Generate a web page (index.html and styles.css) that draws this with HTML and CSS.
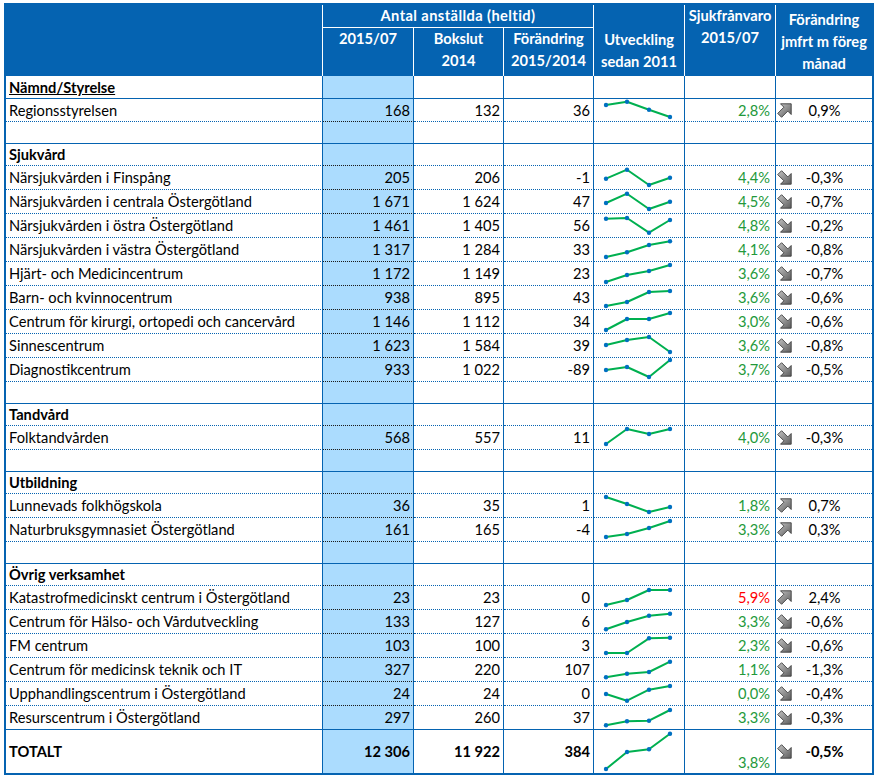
FILE: index.html
```html
<!DOCTYPE html>
<html lang="sv">
<head>
<meta charset="utf-8">
<title>Antal anställda</title>
<link rel="stylesheet" href="styles.css">
</head>
<body>
<svg class="defs" width="0" height="0" aria-hidden="true">
  <defs>
    <linearGradient id="gr" x1="0" y1="0" x2="1" y2="1">
      <stop offset="0" stop-color="#c4c4c4"/>
      <stop offset="1" stop-color="#5c5c5c"/>
    </linearGradient>
    <symbol id="up" viewBox="0 0 15 15">
      <polygon points="3.5,0.8 14.2,0.8 14.2,11.5 10.8,8.1 4.6,14.3 0.7,10.4 6.9,4.2" fill="url(#gr)" stroke="#3c3c3c" stroke-width="0.9" stroke-linejoin="miter"/>
    </symbol>
    <symbol id="down" viewBox="0 0 15 15">
      <polygon points="3.5,14.2 14.2,14.2 14.2,3.5 10.8,6.9 4.6,0.7 0.7,4.6 6.9,10.8" fill="url(#gr)" stroke="#3c3c3c" stroke-width="0.9" stroke-linejoin="miter"/>
    </symbol>
  </defs>
</svg>
<div class="wrap">
<table class="t">
  <colgroup>
    <col class="w-name"><col class="w-n1"><col class="w-n2"><col class="w-n3"><col class="w-spk"><col class="w-sick"><col class="w-chg">
  </colgroup>
  <thead>
    <tr class="h1">
      <th rowspan="2" class="h-name"></th>
      <th colspan="3" class="h-grp">Antal anställda (heltid)</th>
      <th rowspan="2" class="h-spk">Utveckling<br>sedan 2011</th>
      <th rowspan="2" class="h-sick">Sjukfrånvaro<br>2015/07</th>
      <th rowspan="2" class="h-chg">Förändring<br>jmfrt m föreg<br>månad</th>
    </tr>
    <tr class="h2">
      <th>2015/07</th>
      <th>Bokslut<br>2014</th>
      <th>Förändring<br>2015/2014</th>
    </tr>
  </thead>
  <tbody>
    <tr class="sec first solid"><td class="nm"><u>Nämnd/Styrelse</u></td><td class="n1"></td><td></td><td></td><td></td><td></td><td></td></tr>
    <tr class="row r23"><td class="nm">Regionsstyrelsen</td><td class="n1">168</td><td class="n">132</td><td class="n">36</td>
      <td class="spk"><svg class="s22" viewBox="0 1 90 22"><polyline points="12,7 33,3.7 55,11.7 76,19"/><circle cx="12" cy="7"/><circle cx="33" cy="3.7"/><circle cx="55" cy="11.7"/><circle cx="76" cy="19"/></svg></td>
      <td class="sick">2,8%</td><td><div class="chg"><svg class="ar"><use href="#up"/></svg><span>0,9%</span></div></td></tr>
    <tr class="gap solid"><td></td><td class="n1"></td><td></td><td></td><td></td><td></td><td></td></tr>

    <tr class="sec"><td class="nm">Sjukvård</td><td class="n1"></td><td></td><td></td><td></td><td></td><td></td></tr>
    <tr class="row"><td class="nm">Närsjukvården i Finspång</td><td class="n1">205</td><td class="n">206</td><td class="n">-1</td>
      <td class="spk"><svg viewBox="0 1 90 23"><polyline points="12,13.7 33,4.7 55,20 76,12.7"/><circle cx="12" cy="13.7"/><circle cx="33" cy="4.7"/><circle cx="55" cy="20"/><circle cx="76" cy="12.7"/></svg></td>
      <td class="sick">4,4%</td><td><div class="chg"><svg class="ar"><use href="#down"/></svg><span>-0,3%</span></div></td></tr>
    <tr class="row"><td class="nm">Närsjukvården i centrala Östergötland</td><td class="n1">1 671</td><td class="n">1 624</td><td class="n">47</td>
      <td class="spk"><svg viewBox="0 1 90 23"><polyline points="12,14 33,4.7 55,20 76,12.7"/><circle cx="12" cy="14"/><circle cx="33" cy="4.7"/><circle cx="55" cy="20"/><circle cx="76" cy="12.7"/></svg></td>
      <td class="sick">4,5%</td><td><div class="chg"><svg class="ar"><use href="#down"/></svg><span>-0,7%</span></div></td></tr>
    <tr class="row"><td class="nm">Närsjukvården i östra Östergötland</td><td class="n1">1 461</td><td class="n">1 405</td><td class="n">56</td>
      <td class="spk"><svg viewBox="0 1 90 23"><polyline points="12,5.7 33,5 55,19.7 76,7"/><circle cx="12" cy="5.7"/><circle cx="33" cy="5"/><circle cx="55" cy="19.7"/><circle cx="76" cy="7"/></svg></td>
      <td class="sick">4,8%</td><td><div class="chg"><svg class="ar"><use href="#down"/></svg><span>-0,2%</span></div></td></tr>
    <tr class="row"><td class="nm">Närsjukvården i västra Östergötland</td><td class="n1">1 317</td><td class="n">1 284</td><td class="n">33</td>
      <td class="spk"><svg viewBox="0 1 90 23"><polyline points="12,20 33,15.3 55,8 76,4.3"/><circle cx="12" cy="20"/><circle cx="33" cy="15.3"/><circle cx="55" cy="8"/><circle cx="76" cy="4.3"/></svg></td>
      <td class="sick">4,1%</td><td><div class="chg"><svg class="ar"><use href="#down"/></svg><span>-0,8%</span></div></td></tr>
    <tr class="row"><td class="nm">Hjärt- och Medicincentrum</td><td class="n1">1 172</td><td class="n">1 149</td><td class="n">23</td>
      <td class="spk"><svg viewBox="0 1 90 23"><polyline points="12,21 33,14 55,10 76,4"/><circle cx="12" cy="21"/><circle cx="33" cy="14"/><circle cx="55" cy="10"/><circle cx="76" cy="4"/></svg></td>
      <td class="sick">3,6%</td><td><div class="chg"><svg class="ar"><use href="#down"/></svg><span>-0,7%</span></div></td></tr>
    <tr class="row"><td class="nm">Barn- och kvinnocentrum</td><td class="n1">938</td><td class="n">895</td><td class="n">43</td>
      <td class="spk"><svg viewBox="0 1 90 23"><polyline points="12,21 33,17 55,7 76,6"/><circle cx="12" cy="21"/><circle cx="33" cy="17"/><circle cx="55" cy="7"/><circle cx="76" cy="6"/></svg></td>
      <td class="sick">3,6%</td><td><div class="chg"><svg class="ar"><use href="#down"/></svg><span>-0,6%</span></div></td></tr>
    <tr class="row"><td class="nm">Centrum för kirurgi, ortopedi och cancervård</td><td class="n1">1 146</td><td class="n">1 112</td><td class="n">34</td>
      <td class="spk"><svg viewBox="0 1 90 23"><polyline points="12,21 33,10 55,10 76,4"/><circle cx="12" cy="21"/><circle cx="33" cy="10"/><circle cx="55" cy="10"/><circle cx="76" cy="4"/></svg></td>
      <td class="sick">3,0%</td><td><div class="chg"><svg class="ar"><use href="#down"/></svg><span>-0,6%</span></div></td></tr>
    <tr class="row"><td class="nm">Sinnescentrum</td><td class="n1">1 623</td><td class="n">1 584</td><td class="n">39</td>
      <td class="spk"><svg viewBox="0 1 90 23"><polyline points="12,12 33,7 55,4 76,19"/><circle cx="12" cy="12"/><circle cx="33" cy="7"/><circle cx="55" cy="4"/><circle cx="76" cy="19"/></svg></td>
      <td class="sick">3,6%</td><td><div class="chg"><svg class="ar"><use href="#down"/></svg><span>-0,8%</span></div></td></tr>
    <tr class="row"><td class="nm">Diagnostikcentrum</td><td class="n1">933</td><td class="n">1 022</td><td class="n">-89</td>
      <td class="spk"><svg viewBox="0 1 90 23"><polyline points="12,13 33,10 55,20 76,3"/><circle cx="12" cy="13"/><circle cx="33" cy="10"/><circle cx="55" cy="20"/><circle cx="76" cy="3"/></svg></td>
      <td class="sick">3,7%</td><td><div class="chg"><svg class="ar"><use href="#down"/></svg><span>-0,5%</span></div></td></tr>
    <tr class="gap solid"><td></td><td class="n1"></td><td></td><td></td><td></td><td></td><td></td></tr>

    <tr class="sec"><td class="nm">Tandvård</td><td class="n1"></td><td></td><td></td><td></td><td></td><td></td></tr>
    <tr class="row"><td class="nm">Folktandvården</td><td class="n1">568</td><td class="n">557</td><td class="n">11</td>
      <td class="spk"><svg viewBox="0 1 90 23"><polyline points="12,19 33,4 55,9 76,4"/><circle cx="12" cy="19"/><circle cx="33" cy="4"/><circle cx="55" cy="9"/><circle cx="76" cy="4"/></svg></td>
      <td class="sick">4,0%</td><td><div class="chg"><svg class="ar"><use href="#down"/></svg><span>-0,3%</span></div></td></tr>
    <tr class="gap solid"><td></td><td class="n1"></td><td></td><td></td><td></td><td></td><td></td></tr>

    <tr class="sec"><td class="nm">Utbildning</td><td class="n1"></td><td></td><td></td><td></td><td></td><td></td></tr>
    <tr class="row"><td class="nm">Lunnevads folkhögskola</td><td class="n1">36</td><td class="n">35</td><td class="n">1</td>
      <td class="spk"><svg viewBox="0 1 90 23"><polyline points="12,4 33,11 55,19 76,14"/><circle cx="12" cy="4"/><circle cx="33" cy="11"/><circle cx="55" cy="19"/><circle cx="76" cy="14"/></svg></td>
      <td class="sick">1,8%</td><td><div class="chg"><svg class="ar"><use href="#up"/></svg><span>0,7%</span></div></td></tr>
    <tr class="row"><td class="nm">Naturbruksgymnasiet Östergötland</td><td class="n1">161</td><td class="n">165</td><td class="n">-4</td>
      <td class="spk"><svg viewBox="0 1 90 23"><polyline points="12,20 33,17 55,11 76,4"/><circle cx="12" cy="20"/><circle cx="33" cy="17"/><circle cx="55" cy="11"/><circle cx="76" cy="4"/></svg></td>
      <td class="sick">3,3%</td><td><div class="chg"><svg class="ar"><use href="#up"/></svg><span>0,3%</span></div></td></tr>
    <tr class="gap solid"><td></td><td class="n1"></td><td></td><td></td><td></td><td></td><td></td></tr>

    <tr class="sec"><td class="nm">Övrig verksamhet</td><td class="n1"></td><td></td><td></td><td></td><td></td><td></td></tr>
    <tr class="row"><td class="nm">Katastrofmedicinskt centrum i Östergötland</td><td class="n1">23</td><td class="n">23</td><td class="n">0</td>
      <td class="spk"><svg viewBox="0 1 90 23"><polyline points="12,20 33,15 55,5 76,5"/><circle cx="12" cy="20"/><circle cx="33" cy="15"/><circle cx="55" cy="5"/><circle cx="76" cy="5"/></svg></td>
      <td class="sick red">5,9%</td><td><div class="chg"><svg class="ar"><use href="#up"/></svg><span>2,4%</span></div></td></tr>
    <tr class="row"><td class="nm">Centrum för Hälso- och Vårdutveckling</td><td class="n1">133</td><td class="n">127</td><td class="n">6</td>
      <td class="spk"><svg viewBox="0 1 90 23"><polyline points="12,20.3 33,13 55,6.7 76,4.7"/><circle cx="12" cy="20.3"/><circle cx="33" cy="13"/><circle cx="55" cy="6.7"/><circle cx="76" cy="4.7"/></svg></td>
      <td class="sick">3,3%</td><td><div class="chg"><svg class="ar"><use href="#down"/></svg><span>-0,6%</span></div></td></tr>
    <tr class="row"><td class="nm">FM centrum</td><td class="n1">103</td><td class="n">100</td><td class="n">3</td>
      <td class="spk"><svg viewBox="0 1 90 23"><polyline points="12,20 33,20 55,5.3 76,4.7"/><circle cx="12" cy="20"/><circle cx="33" cy="20"/><circle cx="55" cy="5.3"/><circle cx="76" cy="4.7"/></svg></td>
      <td class="sick">2,3%</td><td><div class="chg"><svg class="ar"><use href="#down"/></svg><span>-0,6%</span></div></td></tr>
    <tr class="row"><td class="nm">Centrum för medicinsk teknik och IT</td><td class="n1">327</td><td class="n">220</td><td class="n">107</td>
      <td class="spk"><svg viewBox="0 1 90 23"><polyline points="12,20.3 33,16.7 55,15 76,4.7"/><circle cx="12" cy="20.3"/><circle cx="33" cy="16.7"/><circle cx="55" cy="15"/><circle cx="76" cy="4.7"/></svg></td>
      <td class="sick">1,1%</td><td><div class="chg"><svg class="ar"><use href="#down"/></svg><span>-1,3%</span></div></td></tr>
    <tr class="row"><td class="nm">Upphandlingscentrum i Östergötland</td><td class="n1">24</td><td class="n">24</td><td class="n">0</td>
      <td class="spk"><svg viewBox="0 1 90 23"><polyline points="12,13 33,19.7 55,8.7 76,5"/><circle cx="12" cy="13"/><circle cx="33" cy="19.7"/><circle cx="55" cy="8.7"/><circle cx="76" cy="5"/></svg></td>
      <td class="sick">0,0%</td><td><div class="chg"><svg class="ar"><use href="#down"/></svg><span>-0,4%</span></div></td></tr>
    <tr class="row solid"><td class="nm">Resurscentrum i Östergötland</td><td class="n1">297</td><td class="n">260</td><td class="n">37</td>
      <td class="spk"><svg viewBox="0 1 90 23"><polyline points="12,20.3 33,16.3 55,15.7 76,5"/><circle cx="12" cy="20.3"/><circle cx="33" cy="16.3"/><circle cx="55" cy="15.7"/><circle cx="76" cy="5"/></svg></td>
      <td class="sick">3,3%</td><td><div class="chg"><svg class="ar"><use href="#down"/></svg><span>-0,3%</span></div></td></tr>

    <tr class="total"><td class="nm">TOTALT</td><td class="n1">12 306</td><td class="n">11 922</td><td class="n">384</td>
      <td class="spk"><svg class="tall" viewBox="0 1 90 43"><polyline points="12,40 33,23 55,20.3 76,4.7"/><circle cx="12" cy="40"/><circle cx="33" cy="23"/><circle cx="55" cy="20.3"/><circle cx="76" cy="4.7"/></svg></td>
      <td class="sick bottom">3,8%</td><td><div class="chg"><svg class="ar"><use href="#down"/></svg><span>-0,5%</span></div></td></tr>
  </tbody>
</table>
</div>
</body>
</html>
```

FILE: styles.css
```css
* { box-sizing: border-box; }
body {
  margin: 0;
  background: #fff;
  font-family: Lato, "Liberation Sans", sans-serif;
  color: #000;
}
.defs { position: absolute; width: 0; height: 0; overflow: hidden; }
.wrap { padding: 3px 0 0 4px; }

.t {
  border-collapse: separate;
  border-spacing: 0;
  table-layout: fixed;
  width: 870px;
  border: 2px solid #0563b1;
  font-size: 14.67px;
}
.w-name { width: 317px; }
.w-n1 { width: 91px; }
.w-n2 { width: 90px; }
.w-n3 { width: 90px; }
.w-spk { width: 91px; }
.w-sick { width: 91px; }
.w-chg { width: 96px; }

/* header */
thead th {
  background: #0563b1;
  color: #fff;
  font-weight: 700;
  font-size: 14.67px;
  line-height: 22px;
  border-right: 1px solid #fff;
  padding: 0;
  text-align: center;
  white-space: nowrap;
  overflow: hidden;
}
thead th.h-chg { border-right: 0; }
.h1 { height: 22px; }
.h2 { height: 48px; }
.h2 th { vertical-align: top; }
.h-grp { vertical-align: middle; letter-spacing: 0.4px; border-bottom: 1px solid #fff; }
.h-spk { vertical-align: bottom; padding-bottom: 3px !important; }
.h-sick { vertical-align: top; }
.h-chg { vertical-align: top; padding-top: 4px !important; }

/* body */
tbody td {
  border-right: 1px solid #0563b1;
  border-bottom: 1px dotted #0563b1;
  padding: 0;
  white-space: nowrap;
  vertical-align: middle;
}
tbody td:last-child { border-right: 0; }
tbody td.n1 {
  background: #abdcfe;
  text-align: right;
  padding-right: 3px;
  border-bottom-color: #1a1a1a;
}
.row { height: 24px; }
.r23 { height: 23px; }
.gap { height: 22px; }
.sec { height: 22px; }
.first { height: 23px; }
.sec td { font-weight: 700; }
.solid td, .solid td.n1 { border-bottom-style: solid; border-bottom-color: #0563b1; }
.total { height: 43px; }
.total td { font-weight: 700; border-bottom: 0; }

.nm { padding-left: 3px !important; text-align: left; }
.n { text-align: right; padding-right: 3px !important; }

.spk svg { display: block; width: 90px; height: 23px; overflow: visible; }
.spk svg.s22 { height: 22px; }
.spk svg.tall { height: 43px; }
.spk polyline { fill: none; stroke: #00b050; stroke-width: 2; stroke-linejoin: round; }
.spk circle { r: 2.2px; fill: #0070c0; }

.sick { text-align: right; padding-right: 5px !important; color: #23993a; font-weight: 400 !important; }
.sick.red { color: #ff0000; }
.sick.bottom { vertical-align: bottom; padding-bottom: 2px !important; }

.chg {
  display: grid;
  grid-template-columns: 17px 1fr 17px;
  align-items: center;
  padding-left: 1px;
}
.chg .ar { width: 15px; height: 15px; display: block; }
.chg span { text-align: center; }
```
